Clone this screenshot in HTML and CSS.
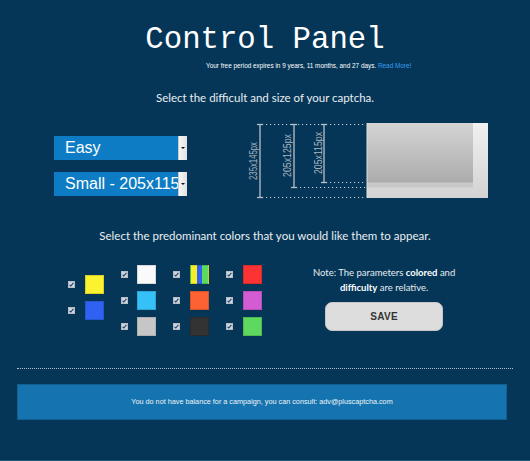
FILE: index.html
```html
<!DOCTYPE html>
<html>
<head>
<meta charset="utf-8">
<link rel="stylesheet" href="styles.css">
</head>
<body>
<header class="header">
  <h1 class="title">Control Panel</h1>
  <p class="trial">Your free period expires in 9 years, 11 months, and 27 days. <a class="more" href="#">Read More!</a></p>
</header>

<p class="prompt prompt-size">Select the difficult and size of your captcha.</p>

<section class="config">
  <div class="selects">
    <div class="select"><span class="select-label">Easy</span><span class="select-arrow"></span></div>
    <div class="select"><span class="select-label">Small - 205x115</span><span class="select-arrow"></span></div>
  </div>
  <svg class="diagram" width="252" height="86" viewBox="0 0 252 86">
    <defs>
      <linearGradient id="gOuter" x1="0" y1="0" x2="0" y2="1">
        <stop offset="0" stop-color="#f1f1f1"/>
        <stop offset="1" stop-color="#d3d3d3"/>
      </linearGradient>
      <linearGradient id="gInner" x1="0" y1="0" x2="0" y2="1">
        <stop offset="0" stop-color="#d4d4d4"/>
        <stop offset="1" stop-color="#acacac"/>
      </linearGradient>
    </defs>
    <g stroke="#c3cbd2" stroke-width="1" stroke-dasharray="1.2 2.8" fill="none">
      <line x1="22" y1="7.5" x2="126" y2="7.5"/>
      <line x1="86" y1="65.5" x2="126" y2="65.5"/>
      <line x1="56" y1="70.5" x2="126" y2="70.5"/>
      <line x1="22" y1="80.5" x2="126" y2="80.5"/>
    </g>
    <g stroke="#b7c0c8" stroke-width="1.3" fill="none">
      <line x1="20" y1="7" x2="20" y2="81"/>
      <line x1="17" y1="7.5" x2="23" y2="7.5"/>
      <line x1="17" y1="80.5" x2="23" y2="80.5"/>
      <line x1="54" y1="7" x2="54" y2="71"/>
      <line x1="51" y1="7.5" x2="57" y2="7.5"/>
      <line x1="51" y1="70.5" x2="57" y2="70.5"/>
      <line x1="84" y1="7" x2="84" y2="66"/>
      <line x1="81" y1="7.5" x2="87" y2="7.5"/>
      <line x1="81" y1="65.5" x2="87" y2="65.5"/>
    </g>
    <g class="dim-label" fill="#a9b5bf" font-size="10" text-anchor="middle">
      <text transform="translate(16.5 44) rotate(-90)" textLength="38" lengthAdjust="spacingAndGlyphs">235x145px</text>
      <text transform="translate(51 38.5) rotate(-90)" textLength="43" lengthAdjust="spacingAndGlyphs">205x125px</text>
      <text transform="translate(81.5 36) rotate(-90)" textLength="42" lengthAdjust="spacingAndGlyphs">205x115px</text>
    </g>
    <rect x="127" y="6" width="121" height="75" fill="url(#gOuter)"/>
    <rect x="127" y="6" width="106" height="64.5" fill="#c9c9c9"/>
    <rect x="127" y="6" width="106" height="59.5" fill="url(#gInner)"/>
    <rect x="126.5" y="6" width="1" height="75" fill="#e0e0e0"/>
  </svg>
</section>

<p class="prompt prompt-colors">Select the predominant colors that you would like them to appear.</p>

<section class="colors">
  <div class="palette">
    <div class="col col-first">
      <div class="opt"><span class="check"><svg width="5" height="5" viewBox="0 0 5 5"><path d="M0.6 2.8 L1.8 4 L4.4 0.8" stroke="#1d3f6b" stroke-width="1.1" fill="none"/></svg></span><span class="swatch yellow"></span></div>
      <div class="opt"><span class="check"><svg width="5" height="5" viewBox="0 0 5 5"><path d="M0.6 2.8 L1.8 4 L4.4 0.8" stroke="#1d3f6b" stroke-width="1.1" fill="none"/></svg></span><span class="swatch blue"></span></div>
    </div>
    <div class="col">
      <div class="opt"><span class="check"><svg width="5" height="5" viewBox="0 0 5 5"><path d="M0.6 2.8 L1.8 4 L4.4 0.8" stroke="#1d3f6b" stroke-width="1.1" fill="none"/></svg></span><span class="swatch white"></span></div>
      <div class="opt"><span class="check"><svg width="5" height="5" viewBox="0 0 5 5"><path d="M0.6 2.8 L1.8 4 L4.4 0.8" stroke="#1d3f6b" stroke-width="1.1" fill="none"/></svg></span><span class="swatch cyan"></span></div>
      <div class="opt"><span class="check"><svg width="5" height="5" viewBox="0 0 5 5"><path d="M0.6 2.8 L1.8 4 L4.4 0.8" stroke="#1d3f6b" stroke-width="1.1" fill="none"/></svg></span><span class="swatch gray"></span></div>
    </div>
    <div class="col">
      <div class="opt"><span class="check"><svg width="5" height="5" viewBox="0 0 5 5"><path d="M0.6 2.8 L1.8 4 L4.4 0.8" stroke="#1d3f6b" stroke-width="1.1" fill="none"/></svg></span><span class="swatch multi"></span></div>
      <div class="opt"><span class="check"><svg width="5" height="5" viewBox="0 0 5 5"><path d="M0.6 2.8 L1.8 4 L4.4 0.8" stroke="#1d3f6b" stroke-width="1.1" fill="none"/></svg></span><span class="swatch orange"></span></div>
      <div class="opt"><span class="check"><svg width="5" height="5" viewBox="0 0 5 5"><path d="M0.6 2.8 L1.8 4 L4.4 0.8" stroke="#1d3f6b" stroke-width="1.1" fill="none"/></svg></span><span class="swatch dark"></span></div>
    </div>
    <div class="col">
      <div class="opt"><span class="check"><svg width="5" height="5" viewBox="0 0 5 5"><path d="M0.6 2.8 L1.8 4 L4.4 0.8" stroke="#1d3f6b" stroke-width="1.1" fill="none"/></svg></span><span class="swatch red"></span></div>
      <div class="opt"><span class="check"><svg width="5" height="5" viewBox="0 0 5 5"><path d="M0.6 2.8 L1.8 4 L4.4 0.8" stroke="#1d3f6b" stroke-width="1.1" fill="none"/></svg></span><span class="swatch violet"></span></div>
      <div class="opt"><span class="check"><svg width="5" height="5" viewBox="0 0 5 5"><path d="M0.6 2.8 L1.8 4 L4.4 0.8" stroke="#1d3f6b" stroke-width="1.1" fill="none"/></svg></span><span class="swatch green"></span></div>
    </div>
  </div>
  <div class="note-block">
    <p class="note">Note: The parameters <b>colored</b> and <b>difficulty</b> are relative.</p>
    <button class="save" type="button">SAVE</button>
  </div>
</section>

<hr class="divider">

<div class="banner">You do not have balance for a campaign, you can consult: adv@pluscaptcha.com</div>
</body>
</html>
```

FILE: styles.css
```css
html {
  background: #053657;
}
body {
  margin: 0;
  width: 530px;
  height: 460px;
  overflow: hidden;
  background: #053657;
  border-bottom: 1px solid #1f5777;
  font-family: "Liberation Sans", Arial, sans-serif;
  color: #ffffff;
}
.header {
  padding-top: 22px;
}
.title {
  margin: 0;
  font-family: "Liberation Mono", "DejaVu Sans Mono", monospace;
  font-weight: normal;
  font-size: 30.7px;
  line-height: 36px;
  text-align: center;
  padding-left: 0;
}
.trial {
  margin: 3px 0 0;
  padding-left: 206px;
  font-size: 6.4px;
  line-height: 10px;
  color: #ffffff;
}
.more {
  color: #3a9df0;
  text-decoration: none;
}
.prompt {
  margin: 0;
  font-family: Lato, "Open Sans", sans-serif;
  font-size: 11.5px;
  line-height: 18px;
  text-align: center;
  color: #e9eef2;
}
.prompt-size {
  margin-top: 18px;
}
.config {
  display: flex;
  align-items: flex-start;
  gap: 53px;
  padding-left: 54px;
  margin-top: 10px;
}
.selects {
  display: flex;
  flex-direction: column;
  gap: 12px;
  margin-top: 19px;
  width: 133px;
}
.select {
  display: flex;
  height: 24px;
  background: #0e7cc4;
}
.select-label {
  flex: 1;
  min-width: 0;
  white-space: nowrap;
  padding-left: 11px;
  font-size: 16px;
  line-height: 24px;
  color: #ffffff;
}
.select-arrow {
  width: 8px;
  position: relative;
  background: linear-gradient(to right, #f6f6f6, #e2e2e2);
  border-left: 1px solid #c9c9c9;
}
.select-arrow::after {
  content: "";
  position: absolute;
  left: 2px;
  top: 10.5px;
  border-left: 2px solid transparent;
  border-right: 2px solid transparent;
  border-top: 2.5px solid #111111;
}
.diagram {
  display: block;
  font-family: "Liberation Sans", Arial, sans-serif;
}
.prompt-colors {
  margin-top: 24px;
}
.colors {
  display: flex;
  align-items: flex-start;
  margin-top: 16px;
  padding-left: 68px;
}
.palette {
  display: grid;
  grid-template-columns: repeat(4, 36px);
  column-gap: 16.7px;
}
.col {
  display: flex;
  flex-direction: column;
}
.col-first {
  align-self: center;
  padding-bottom: 6px;
}
.opt {
  display: flex;
  align-items: center;
  gap: 9.5px;
  height: 26px;
}
.check {
  width: 7px;
  height: 7px;
  box-sizing: border-box;
  background: #cdd5dc;
  border: 1px solid #b4bdc6;
  display: flex;
  align-items: center;
  justify-content: center;
}
.check svg {
  display: block;
}
.swatch {
  width: 19px;
  height: 19px;
  box-sizing: border-box;
  border: 1px solid rgba(0, 0, 0, 0.14);
}
.yellow { background: #fdf22f; }
.blue { background: #2f62f3; }
.white { background: #fafafa; border-color: #d8d8d8; }
.cyan { background: #35c0f8; }
.gray { background: #c6c6c6; border-color: #b0b0b0; }
.multi { background: linear-gradient(to right, #f7ee2a 0 33%, #2f62f3 33% 66%, #5ed85e 66% 100%); }
.orange { background: #fc6232; }
.dark { background: #333333; border-color: #2a2a2a; }
.red { background: #fc3333; }
.violet { background: #d35cd3; }
.green { background: #5ed85e; }
.note-block {
  width: 160px;
  margin-left: 42px;
  padding-top: 4px;
  display: flex;
  flex-direction: column;
  align-items: center;
}
.note {
  margin: 0;
  font-family: Lato, "Open Sans", sans-serif;
  font-size: 9.5px;
  line-height: 15px;
  text-align: center;
  color: #e6ecf0;
}
.note b {
  color: #ffffff;
}
.save {
  margin-top: 7px;
  width: 118px;
  height: 29px;
  border: 1px solid #c6c6c6;
  border-radius: 7px;
  background: #dddddd;
  font-family: "Liberation Sans", Arial, sans-serif;
  font-weight: bold;
  font-size: 10px;
  letter-spacing: 0.3px;
  color: #333333;
  padding: 0;
}
.divider {
  margin: 29px 17px 0 17px;
  border: 0;
  border-top: 1px dotted #b3c0ca;
  height: 0;
}
.banner {
  margin: 15px 23px 0 17px;
  height: 36px;
  box-sizing: border-box;
  background: #1573af;
  border: 1px solid #125f92;
  font-size: 7.25px;
  line-height: 34px;
  text-align: center;
  color: #eef3f7;
}
```
